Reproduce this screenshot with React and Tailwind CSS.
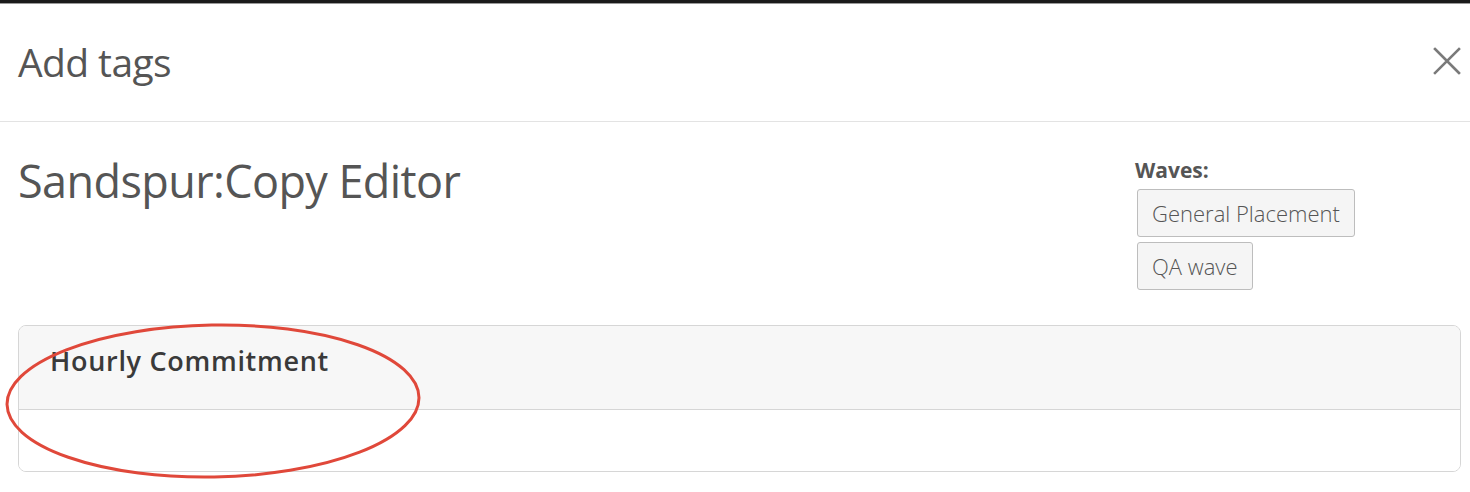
import React from "react";

export default function App() {
  return (
    <div className="relative w-[1470px] h-[492px] overflow-hidden bg-white" style={{ fontFamily: '"Open Sans", "Noto Sans", sans-serif' }}>
      <div className="h-[3px] bg-[#1b1b1b]" />
      <div className="h-[1px] bg-[#9a9a9a]" />
      {/* header */}
      <div className="flex items-center justify-between h-[118px] border-b border-[#e3e3e3] pl-[18px] pr-[6px]">
        <h4 className="text-[39px] leading-none text-[#555] font-medium pb-[2px] tracking-[-0.6px]">Add tags</h4>
        <button className="w-[34px] h-[34px] flex items-center justify-center mb-[4px]">
          <svg width="28" height="28" viewBox="0 0 28 28" fill="none" stroke="#7a7a7a" strokeWidth="2.6" strokeLinecap="square">
            <path d="M2 2 L26 26 M26 2 L2 26" />
          </svg>
        </button>
      </div>
      {/* body */}
      <div className="px-[18px] pt-[32px]">
        <div className="flex justify-between">
          <h2 className="text-[45px] leading-[54px] text-[#555] tracking-[-0.6px]">Sandspur:Copy Editor</h2>
          <div className="w-[317px] pt-[3px] flex flex-col items-start">
            <div className="text-[21px] font-bold leading-[26px] text-[#555]">Waves:</div>
            <div className="mt-[6px] ml-[2px] h-[48px] px-[14px] flex items-center bg-[#f5f5f5] border border-[#bdbdbd] rounded-[3px] text-[22px] font-light text-[#555]">General Placement</div>
            <div className="mt-[5px] ml-[2px] h-[48px] px-[14px] flex items-center bg-[#f5f5f5] border border-[#bdbdbd] rounded-[3px] text-[22px] font-light text-[#555]">QA wave</div>
          </div>
        </div>
        <div className="mt-[35px] w-[1443px] border border-[#d6d6d6] rounded-[8px] overflow-hidden">
          <div className="h-[84px] bg-[#f7f7f7] border-b border-[#d6d6d6] px-[31px] pt-[16px]">
            <div className="text-[27px] font-semibold text-[#3a3a3a] leading-[38px] tracking-[0.7px]">Hourly Commitment</div>
          </div>
          <div className="h-[61px] bg-white" />
        </div>
      </div>
      {/* annotation ellipse */}
      <svg className="absolute left-0 top-0 pointer-events-none" width="1470" height="492">
        <ellipse cx="213" cy="401" rx="206" ry="76" fill="none" stroke="#e0483a" strokeWidth="3" transform="rotate(-1 213 401)" />
      </svg>
    </div>
  );
}
